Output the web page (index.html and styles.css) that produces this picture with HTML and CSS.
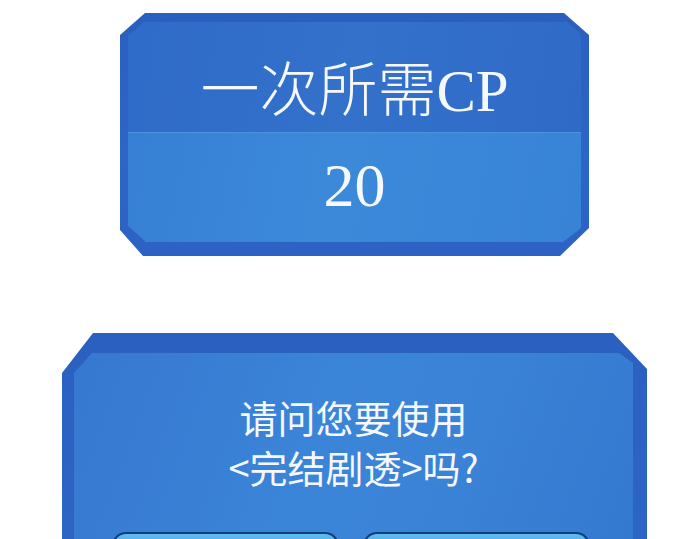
FILE: index.html
```html
<!DOCTYPE html>
<html lang="zh-CN">
<head>
    <meta charset="utf-8" />
    <title>完结剧透</title>
    <link rel="stylesheet" href="styles.css">
</head>
<body>

<div class="page">
    <div class="cost">
        <div class="cost-inner">
            <div class="cost-head">一次所需CP</div>
            <div class="cost-body">20</div>
        </div>
    </div>

    <div class="ask">
        <div class="ask-inner">
            <p class="ask-text">请问您要使用<br />&lt;完结剧透&gt;吗?</p>
            <div class="ask-btns">
                <span class="btn"></span>
                <span class="btn"></span>
            </div>
        </div>
    </div>
</div>

</body>
</html>
```

FILE: styles.css
```css
* { padding: 0; margin: 0; }

html, body { overflow: hidden; }
body { background: #fff; color: #f5f9ff; }

.page { display: flex; flex-direction: column; align-items: center; padding: 13px 0 0 19px; }

/* cost card */
.cost { width: 469px; height: 243px; padding: 9px 8px 14px; box-sizing: border-box; background: linear-gradient(180deg, #2a5fc0, #2d66c6 60%, #2c62c3); clip-path: polygon(25px 0, 444px 0, 469px 22px, 469px 215px, 440px 243px, 23px 243px, 0 217px, 0 22px); }
.cost-inner { height: 100%; display: flex; flex-direction: column; clip-path: polygon(16px 0, calc(100% - 14px) 0, 100% 12px, 100% calc(100% - 14px), calc(100% - 18px) 100%, 18px 100%, 0 calc(100% - 16px), 0 14px); }
.cost-head { height: 110px; display: flex; align-items: center; justify-content: center; padding-top: 16px; box-sizing: border-box; background: linear-gradient(100deg, #2f6bc8, #3371cb 50%, #2f6ac7); font-family: "Liberation Serif", "Noto Sans CJK SC", serif; font-size: 59px; font-weight: 300; }
.cost-body { flex: 1; display: flex; align-items: center; justify-content: center; padding-bottom: 5px; background: linear-gradient(100deg, #3780d5, #3c89da 45%, #3883d6); border-top: 1px solid #4a92dc; font-family: "Liberation Serif", serif; font-size: 62px; }

/* question box, cut off by the bottom of the window */
.ask { width: 585px; height: 206px; margin-top: 77px; padding: 20px 14px 0 12px; box-sizing: border-box; background: linear-gradient(180deg, #2b60c1, #2d65c5); clip-path: polygon(31px 0, 551px 0, 585px 36px, 585px 100%, 0 100%, 0 40px); }
.ask-inner { height: 100%; overflow: hidden; padding-top: 39px; box-sizing: border-box; text-align: center; background: linear-gradient(110deg, #3678d0, #3b85d8 45%, #3a82d6 70%, #3479d0); clip-path: polygon(18px 0, calc(100% - 14px) 0, 100% 10px, 100% 100%, 0 100%, 0 20px); }
.ask-text { font-family: "Noto Sans CJK SC", "Liberation Sans", sans-serif; font-size: 38px; line-height: 50px; font-weight: 400; }
.ask-btns { display: flex; justify-content: center; gap: 24px; margin: 40px 6px 0 0; }
.btn { width: 227px; height: 40px; flex: none; box-sizing: border-box; border: 2px solid #123e7c; border-bottom: none; border-radius: 14px 14px 0 0; background: linear-gradient(180deg, #5fbcef, #47a4e6 40%, #3b92dc); }
```
